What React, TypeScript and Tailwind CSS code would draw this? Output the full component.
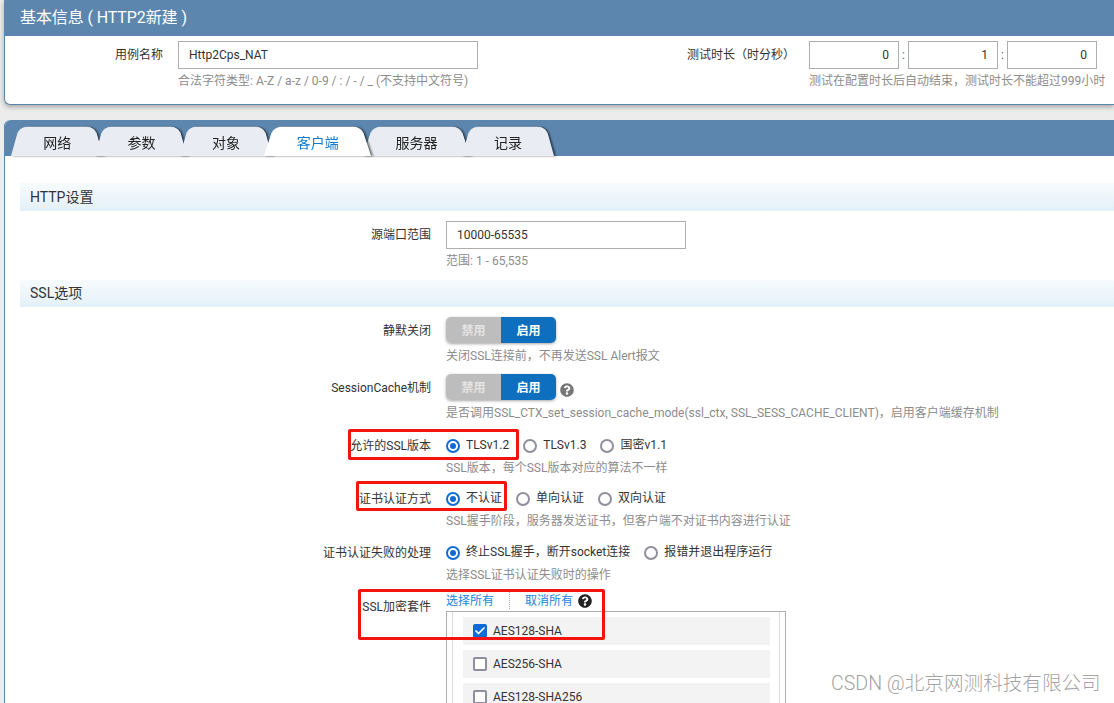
import type { ReactNode } from 'react';
import { Check } from 'lucide-react';
import { FaQuestionCircle } from 'react-icons/fa';

const tabs = [
  { title: '网络', width: 'w-[84.4px]' },
  { title: '参数', width: 'w-[84.4px]' },
  { title: '对象', width: 'w-[84.4px]' },
  { title: '客户端', width: 'w-[99px]', active: true },
  { title: '服务器', width: 'w-[98.6px]' },
  { title: '记录', width: 'w-[84.4px]' },
];

const suites = [
  { name: 'AES128-SHA', checked: true },
  { name: 'AES256-SHA' },
  { name: 'AES128-SHA256' },
];

function Radio({ label, checked }: { label: string; checked?: boolean }) {
  return (
    <span className="flex items-center gap-[6px]">
      <span
        className={`flex h-[14px] w-[14px] items-center justify-center rounded-full border-2 ${
          checked ? 'border-[#0f6cd6]' : 'border-[#8f8f9d]'
        }`}
      >
        {checked && <span className="h-[6px] w-[6px] rounded-full bg-[#0f6cd6]" />}
      </span>
      <span className="-translate-y-[1px]">{label}</span>
    </span>
  );
}

function Toggle() {
  return (
    <div className="flex h-[26px] w-[110px] -translate-y-[1px] overflow-hidden rounded-[5px] text-xs font-bold shadow-[0_1px_3px_rgba(0,0,0,0.35)]">
      <span className="flex w-[55px] items-center justify-center bg-[#bdbdbd] pt-[2px] text-[#e4e4e4]">禁用</span>
      <span className="flex w-[55px] items-center justify-center bg-[#0e6fbe] pt-[2px] text-white">启用</span>
    </div>
  );
}

function Row({
  label,
  hint,
  className,
  children,
}: {
  label: string;
  hint?: string;
  className?: string;
  children: ReactNode;
}) {
  return (
    <div className={`grid grid-cols-[411px_1fr] gap-x-[15px] ${className ?? ''}`}>
      <div className="flex items-center justify-end text-[#333]">{label}</div>
      <div className="flex min-h-[20px] items-center">{children}</div>
      {hint && <div className="col-start-2 mt-[4px] h-4 leading-4 text-[#8c8c8c]">{hint}</div>}
    </div>
  );
}

function Section({ title, className }: { title: string; className?: string }) {
  return (
    <div
      className={`flex items-center bg-gradient-to-b from-[#f7fbfe] to-[#e3f0f8] pl-[10px] text-sm text-[#333] ${className ?? ''}`}
    >
      {title}
    </div>
  );
}

function TextBox({ value, className }: { value: string; className?: string }) {
  return (
    <input
      readOnly
      value={value}
      className={`h-[28px] border border-[#aeaeae] bg-white text-xs text-[#333] outline-none ${className ?? ''}`}
    />
  );
}

export default function App() {
  return (
    <div
      className="relative h-[703px] overflow-hidden bg-[#ececec] pl-[4px] text-xs"
      style={{ fontFamily: 'Roboto, "Noto Sans CJK SC", sans-serif' }}
    >
      {/* 基本信息 */}
      <div className="h-[105px] overflow-hidden rounded-bl-md border-b border-l border-[#5d86ae] bg-white shadow-[0_2px_5px_rgba(0,0,0,0.3)]">
        <div className="flex h-[36px] items-center bg-[#5d86ae] pl-[15px] text-base tracking-[-0.1px] text-white">
          基本信息 ( HTTP2新建 )
        </div>
        <div className="grid grid-cols-[158px_300px_301px_auto] gap-x-[15px] pt-[5px]">
          <div className="flex items-center justify-end text-[#333]">用例名称</div>
          <TextBox value="Http2Cps_NAT" className="w-[300px] pl-[10px]" />
          <div className="-mr-[1px] flex items-center justify-end text-[#333]">测试时长（时分秒）</div>
          <div className="flex items-center text-[#666]">
            <TextBox value="0" className="w-[90px] pr-[9px] text-right" />
            <span className="w-[9px] text-center">:</span>
            <TextBox value="1" className="w-[90px] pr-[9px] text-right" />
            <span className="w-[9px] text-center">:</span>
            <TextBox value="0" className="w-[90px] pr-[9px] text-right" />
          </div>
          <div className="col-start-2 mt-[4px] leading-4 text-[#8c8c8c]">合法字符类型: A-Z / a-z / 0-9 / : / - / _ (不支持中文符号)</div>
          <div className="col-start-4 mt-[4px] whitespace-nowrap leading-4 text-[#8c8c8c]">测试在配置时长后自动结束，测试时长不能超过999小时</div>
        </div>
      </div>

      {/* 配置面板 */}
      <div className="mt-[15px] h-[600px] rounded-tl-md border-l border-[#5d86ae] bg-white">
        <div className="flex h-[36px] items-end rounded-tl-md bg-[#5d86ae] pl-[10px]">
          {tabs.map((tab) => (
            <div
              key={tab.title}
              className={`relative flex h-[29px] items-center justify-center text-sm ${tab.width} ${
                tab.active ? 'z-10 text-[#0f7ccf]' : 'text-[#222]'
              }`}
            >
              <span
                className={`absolute bottom-0 -left-[4px] -right-[4px] h-[38px] origin-bottom rounded-t-[10px] [transform:perspective(60px)_rotateX(20deg)] ${
                  tab.active ? 'bg-white' : 'bg-[#e9edf3]'
                } [filter:drop-shadow(2px_0_1px_rgba(0,0,0,0.55))]`}
              />
              <span className="relative translate-y-[1px]">{tab.title}</span>
            </div>
          ))}
        </div>

        <div className="pl-[15px] pt-[27px]">
          <Section title="HTTP设置" className="h-[28px]" />
          <Row label="源端口范围" hint="范围: 1 - 65,535" className="mt-[10px]">
            <TextBox value="10000-65535" className="w-[240px] pl-[10px]" />
          </Row>

          <Section title="SSL选项" className="mt-[11px] h-[27px] pb-[2px]" />
          <Row label="静默关闭" hint="关闭SSL连接前，不再发送SSL Alert报文" className="mt-[11px]">
            <Toggle />
          </Row>
          <Row
            label="SessionCache机制"
            hint="是否调用SSL_CTX_set_session_cache_mode(ssl_ctx, SSL_SESS_CACHE_CLIENT)，启用客户端缓存机制"
            className="mt-[11px]"
          >
            <Toggle />
            <FaQuestionCircle className="ml-[4px] mt-[4px] text-[14px] text-[#777]" />
          </Row>
          <Row label="允许的SSL版本" hint="SSL版本，每个SSL版本对应的算法不一样" className="mt-[15px]">
            <div className="flex gap-[14px] text-[#333]">
              <Radio label="TLSv1.2" checked />
              <Radio label="TLSv1.3" />
              <Radio label="国密v1.1" />
            </div>
          </Row>
          <Row label="证书认证方式" hint="SSL握手阶段，服务器发送证书，但客户端不对证书内容进行认证" className="mt-[13px]">
            <div className="flex gap-[14px] text-[#333]">
              <Radio label="不认证" checked />
              <Radio label="单向认证" />
              <Radio label="双向认证" />
            </div>
          </Row>
          <Row label="证书认证失败的处理" hint="选择SSL证书认证失败时的操作" className="mt-[14px]">
            <div className="flex gap-[14px] text-[#333]">
              <Radio label="终止SSL握手，断开socket连接" checked />
              <Radio label="报错并退出程序运行" />
            </div>
          </Row>

          <div className="mt-[9px] grid grid-cols-[411px_1fr] gap-x-[15px]">
            <div className="pt-[5px] text-right leading-5 text-[#333]">SSL加密套件</div>
            <div>
              <div className="flex h-[19px] items-center pb-[2px] text-[#1a84e0]">
                <span>选择所有</span>
                <span className="mx-[15px] h-[17px] border-l border-dotted border-[#aaa]" />
                <span>取消所有</span>
                <FaQuestionCircle className="ml-[5px] text-[14px] text-[#222]" />
              </div>
              <div className="w-[340px] border border-b-0 border-[#aeaeae]">
                <div className="mx-[5px] flex flex-col gap-[5px] border-x border-[#dcdcdc] pb-[10px] pl-[10px] pr-[9px] pt-[5px]">
                  {suites.map((suite) => (
                    <div key={suite.name} className="flex h-[28px] items-center gap-[6px] bg-[#f3f3f3] pl-[10px] text-[#333]">
                      {suite.checked ? (
                        <span className="flex h-[14px] w-[14px] items-center justify-center rounded-[2px] bg-[#0f6cd6]">
                          <Check size={12} strokeWidth={3.5} className="text-white" />
                        </span>
                      ) : (
                        <span className="h-[14px] w-[14px] rounded-[2px] border-2 border-[#8f8f9d] bg-white" />
                      )}
                      <span>{suite.name}</span>
                    </div>
                  ))}
                </div>
              </div>
            </div>
          </div>
        </div>
      </div>

      {/* 红框标注 */}
      <div className="absolute left-[348px] top-[429px] h-[31px] w-[171px] rounded-[2px] border-[3px] border-[#f5130d]" />
      <div className="absolute left-[356px] top-[481px] h-[30px] w-[151px] rounded-[2px] border-[3px] border-[#f5130d]" />
      <div className="absolute left-[358px] top-[589px] h-[51px] w-[247px] rounded-[2px] border-[3px] border-[#f5130d]" />

      {/* 水印 */}
      <div className="absolute left-[831px] top-[671px] whitespace-nowrap text-[19.6px] font-light leading-[26px] text-[#8a8a8a]/80">
        CSDN @北京网测科技有限公司
      </div>
    </div>
  );
}
